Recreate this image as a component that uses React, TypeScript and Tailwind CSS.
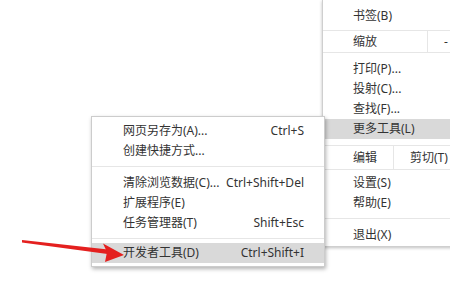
import React from "react";

const font = { fontFamily: '"Noto Sans", "Noto Sans CJK SC", sans-serif' };

function Row({ label, shortcut, active }: { label: string; shortcut?: string; active?: boolean }) {
  return (
    <div
      className={`flex h-[20px] items-center justify-between pl-[31px] pr-[20px] ${active ? "bg-[#d9d9d9]" : ""}`}
    >
      <span>{label}</span>
      {shortcut && <span>{shortcut}</span>}
    </div>
  );
}

function RRow({ label, active }: { label: string; active?: boolean }) {
  return (
    <div className={`flex h-[20px] items-center pl-[30px] ${active ? "bg-[#d9d9d9]" : ""}`}>
      <span>{label}</span>
    </div>
  );
}

const Line = () => <div className="h-px bg-[#e6e6e6]" />;

export default function App() {
  return (
    <div
      className="relative h-[296px] w-[450px] overflow-hidden bg-white text-[12px] leading-none text-[#333333]"
      style={font}
    >
      {/* main menu */}
      <div className="absolute left-[322px] top-0 w-[150px] border-b border-l border-[#cfcfcf] bg-white shadow-[0_1px_3px_rgba(0,0,0,0.25)]">
        <div className="h-[5px]" />
        <div className="flex h-[21px] items-center pl-[30px]">书签(B)</div>
        <div className="h-[4px]" />
        <Line />
        <div className="flex h-[21px] items-center">
          <span className="w-[104px] pl-[30px]">缩放</span>
          <div className="h-full w-px bg-[#e6e6e6]" />
          <span className="pl-[16px]">-</span>
        </div>
        <Line />
        <div className="pt-[6px] pb-[6px]">
          <RRow label="打印(P)..." />
          <RRow label="投射(C)..." />
          <RRow label="查找(F)..." />
          <RRow label="更多工具(L)" active />
        </div>
        <Line />
        <div className="flex h-[23px] items-center">
          <span className="w-[70px] pl-[30px]">编辑</span>
          <div className="h-full w-px bg-[#e6e6e6]" />
          <span className="pl-[16px]">剪切(T)</span>
        </div>
        <Line />
        <div className="pt-[3px] pb-[5px]">
          <RRow label="设置(S)" />
          <RRow label="帮助(E)" />
        </div>
        <Line />
        <div className="pt-[6px] pb-[1px]">
          <RRow label="退出(X)" />
        </div>
      </div>

      {/* submenu */}
      <div className="absolute left-[91px] top-[116px] w-[234px] border border-[#cccccc] bg-white shadow-[1px_2px_4px_rgba(0,0,0,0.3)]">
        <div className="pt-[4px] pb-[5px]">
          <Row label="网页另存为(A)..." shortcut="Ctrl+S" />
          <Row label="创建快捷方式..." />
        </div>
        <Line />
        <div className="pt-[6px] pb-[5px]">
          <Row label="清除浏览数据(C)..." shortcut="Ctrl+Shift+Del" />
          <Row label="扩展程序(E)" />
          <Row label="任务管理器(T)" shortcut="Shift+Esc" />
        </div>
        <Line />
        <div className="pt-[4px] pb-[3px]">
          <Row label="开发者工具(D)" shortcut="Ctrl+Shift+I" active />
        </div>
      </div>

      {/* red arrow */}
      <svg className="absolute left-0 top-0" width="450" height="296" viewBox="0 0 450 296">
        <polygon points="22,240 108,249.5 107.5,254 22,242.5" fill="#e4201f" />
        <polygon points="124,255 103,243.5 107,252 105,262" fill="#e4201f" />
      </svg>
    </div>
  );
}
